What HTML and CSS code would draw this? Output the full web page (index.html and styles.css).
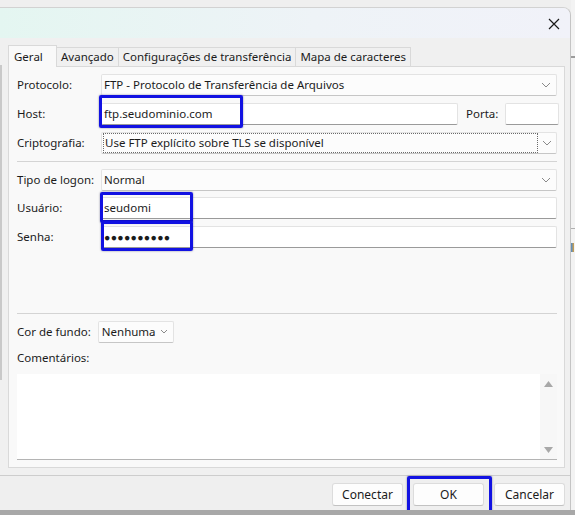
FILE: index.html
```html
<!DOCTYPE html>
<html lang="pt-BR">
<head>
  <meta charset="UTF-8" />
  <title>Gerenciador de Sites</title>
  <link rel="stylesheet" href="styles.css">
</head>
<body>
  <div class="screen">
    <div class="dialog">
      <div class="titlebar">
        <svg class="close" width="12" height="12" viewBox="0 0 12 12">
          <path d="M1 1L11 11M11 1L1 11" stroke="#1a1a1a" stroke-width="1.2" fill="none" />
        </svg>
      </div>

      <div class="body">
        <div class="edge"></div>
        <div class="tabs-wrap">
          <div class="tabs">
            <div class="tab active">Geral</div>
            <div class="tab">Avançado</div>
            <div class="tab">Configurações de transferência</div>
            <div class="tab">Mapa de caracteres</div>
          </div>

          <div class="panel">
            <div class="row">
              <label class="lbl">Protocolo:</label>
              <div class="field select">
                <span>FTP - Protocolo de Transferência de Arquivos</span>
                <svg class="chev" width="10" height="6" viewBox="0 0 10 6"><path d="M1 1L5 5L9 1" stroke="#8a8a8a" fill="none" /></svg>
              </div>
            </div>

            <div class="row">
              <label class="lbl">Host:</label>
              <div class="field input host">
                <span>ftp.seudominio.com</span>
                <div class="mark mark-host"></div>
              </div>
              <label class="lbl-port">Porta:</label>
              <div class="field input port"></div>
            </div>

            <div class="row">
              <label class="lbl">Criptografia:</label>
              <div class="field combo">
                <div class="combo-text"><span>Use FTP explícito sobre TLS se disponível</span></div>
                <div class="combo-btn">
                  <svg class="chev" width="10" height="6" viewBox="0 0 10 6"><path d="M1 1L5 5L9 1" stroke="#8a8a8a" fill="none" /></svg>
                </div>
              </div>
            </div>

            <div class="sep"></div>

            <div class="row">
              <label class="lbl">Tipo de logon:</label>
              <div class="field select">
                <span>Normal</span>
                <svg class="chev" width="10" height="6" viewBox="0 0 10 6"><path d="M1 1L5 5L9 1" stroke="#8a8a8a" fill="none" /></svg>
              </div>
            </div>

            <div class="row tight">
              <label class="lbl">Usuário:</label>
              <div class="field input">
                <span>seudomi</span>
                <div class="mark mark-user"></div>
              </div>
            </div>

            <div class="row">
              <label class="lbl">Senha:</label>
              <div class="field input">
                <span class="dots">●●●●●●●●●●</span>
                <div class="mark mark-pass"></div>
              </div>
            </div>

            <div class="spacer"></div>
            <div class="sep"></div>

            <div class="row">
              <label class="lbl-color">Cor de fundo:</label>
              <div class="field select small">
                <span>Nenhuma</span>
                <svg class="chev" width="8" height="5" viewBox="0 0 8 5"><path d="M1 1L4 4L7 1" stroke="#8a8a8a" fill="none" /></svg>
              </div>
            </div>

            <div class="comments-lbl">Comentários:</div>
            <div class="textarea">
              <div class="scroll">
                <svg width="9" height="6" viewBox="0 0 9 6"><path d="M0 6L4.5 0L9 6Z" fill="#a8a8a8" /></svg>
                <svg width="9" height="6" viewBox="0 0 9 6"><path d="M0 0L4.5 6L9 0Z" fill="#a8a8a8" /></svg>
              </div>
            </div>
          </div>
        </div>
      </div>

      <div class="buttons">
        <button class="btn">Conectar</button>
        <button class="btn btn-ok">OK<span class="mark mark-ok"></span></button>
        <button class="btn">Cancelar</button>
      </div>
    </div>

    <div class="behind">
      <div class="behind-top"></div>
      <div class="behind-mid"></div>
      <div class="behind-icon"></div>
    </div>
  </div>
</body>
</html>
```

FILE: styles.css
```css
body {
  margin: 0;
  background: #a8a8a8;
  font-family: "Noto Sans", "Segoe UI", sans-serif;
  font-size: 11.5px;
  color: #1b1b1b;
}
.screen {
  display: flex;
  width: 575px;
  height: 510px;
  background: #efefef;
  overflow: hidden;
}

.dialog {
  width: 570px;
  margin-top: 7px;
  display: flex;
  flex-direction: column;
  background: #f0f0f0;
  border-top: 1px solid #d2d2d2;
  border-right: 1px solid #c4c4c4;
  border-top-right-radius: 8px;
  overflow: hidden;
}

.titlebar {
  height: 30px;
  background: linear-gradient(90deg, #e4f6f1, #eef3f7 55%, #f1f2f9);
  display: flex;
  justify-content: flex-end;
  align-items: center;
}
.close {
  margin-right: 10px;
  margin-top: 1px;
}

.body {
  display: flex;
  padding-top: 6px;
}
.edge {
  width: 2px;
  height: 315px;
  margin-top: 21px;
  margin-right: 6px;
  background: #c9c9c9;
}
.tabs-wrap {
  width: 557px;
}

.tabs {
  display: flex;
  align-items: flex-end;
  height: 22px;
}
.tab {
  height: 19px;
  padding: 0 4px;
  line-height: 18px;
  background: #f0f0f0;
  border: 1px solid #d9d9d9;
  border-bottom: none;
  border-left: none;
  box-sizing: border-box;
}
.tab.active {
  height: 22px;
  padding: 0 6px 0 5px;
  line-height: 21px;
  background: #f9f9f9;
  border-left: 1px solid #d9d9d9;
  margin-bottom: -1px;
  position: relative;
  width: 49px;
}

.panel {
  background: #f9f9f9;
  border: 1px solid #d9d9d9;
  height: 402px;
  box-sizing: border-box;
  padding: 7px 7px 0 8px;
  display: flex;
  flex-direction: column;
  gap: 7px;
}

.row {
  display: flex;
  align-items: center;
  height: 22px;
}
.row.tight {
  margin-top: -1px;
}
.lbl,
.lbl-port,
.lbl-color {
  padding-bottom: 2px;
}
.lbl {
  width: 84px;
  flex: none;
}
.lbl-port {
  margin: 0 7px 0 8px;
}
.lbl-color {
  margin-right: 7px;
}

.field {
  position: relative;
  height: 22px;
  box-sizing: border-box;
  border: 1px solid #e3e3e3;
  border-bottom-color: #9a9a9a;
  border-radius: 2px;
  display: flex;
  align-items: center;
  padding: 0 2px 1px;
  flex: 1;
}
.input {
  background: #ffffff;
}
.select {
  background: #fcfcfc;
  border-bottom-color: #c6c6c6;
  justify-content: space-between;
}
.select .chev {
  margin-right: 3px;
}
.host {
  flex: none;
  width: 357px;
}
.port {
  flex: none;
  width: 54px;
}
.small {
  flex: none;
  width: 76px;
  padding-left: 3px;
}

.combo {
  padding: 0;
  background: #fcfcfc;
  border-bottom-color: #c6c6c6;
}
.combo-text {
  flex: 1;
  height: 20px;
  margin-left: 1px;
  border: 1px dotted #6a6a6a;
  box-sizing: border-box;
  display: flex;
  align-items: center;
  padding: 0 0 1px 1px;
  background: #fcfcfc;
}
.combo-btn {
  width: 18px;
  display: flex;
  justify-content: center;
}

.dots {
  font-size: 10.5px;
  letter-spacing: 0.3px;
}

.sep {
  height: 1px;
  background: #d4d4d4;
}
.spacer {
  height: 51px;
}

.comments-lbl {
  height: 16px;
  line-height: 16px;
}
.textarea {
  height: 85px;
  margin-top: 1px;
  background: #ffffff;
  border-bottom: 1px solid #b4b4b4;
  display: flex;
  justify-content: flex-end;
}
.scroll {
  width: 17px;
  background: #f7f7f7;
  display: flex;
  flex-direction: column;
  justify-content: space-between;
  align-items: center;
  padding: 7px 0 6px;
}

.mark {
  position: absolute;
  border: 3px solid #1212e2;
  border-radius: 2px;
  box-shadow: 0 0 2px rgba(0, 0, 60, 0.5);
  box-sizing: border-box;
  pointer-events: none;
}
.mark-host {
  left: -3px;
  top: -9px;
  width: 144px;
  height: 33px;
}
.mark-user {
  left: -2px;
  top: -6px;
  width: 93px;
  height: 31px;
}
.mark-pass {
  left: -1px;
  top: -6px;
  width: 92px;
  height: 30px;
}

.buttons {
  margin-top: 7px;
  border-top: 1px solid #cdcdcd;
  height: 35px;
  box-sizing: border-box;
  padding: 3px 5px 0 0;
  background: #efefef;
  display: flex;
  justify-content: flex-end;
  align-items: center;
  gap: 10px;
}
.btn {
  position: relative;
  width: 71px;
  height: 23px;
  background: #fdfdfd;
  border: 1px solid #dcdcdc;
  border-bottom-color: #c2c2c2;
  border-radius: 3px;
  font-family: "Noto Sans", "Segoe UI", sans-serif;
  font-size: 12px;
  color: #1b1b1b;
  padding: 0 0 1px;
}
.mark-ok {
  left: -7px;
  top: -8px;
  width: 85px;
  height: 37px;
}

.behind {
  flex: 1;
  background: #f3f3f3;
  display: flex;
  flex-direction: column;
}
.behind-top {
  margin-top: 56px;
  height: 2px;
  background: #9c9c9c;
}
.behind-mid {
  margin-top: 170px;
  height: 1px;
  background: #b0b0b0;
}
.behind-icon {
  margin-top: 14px;
  width: 3px;
  height: 9px;
  background: linear-gradient(90deg, #4a8bd0, #d8a040);
}
```
